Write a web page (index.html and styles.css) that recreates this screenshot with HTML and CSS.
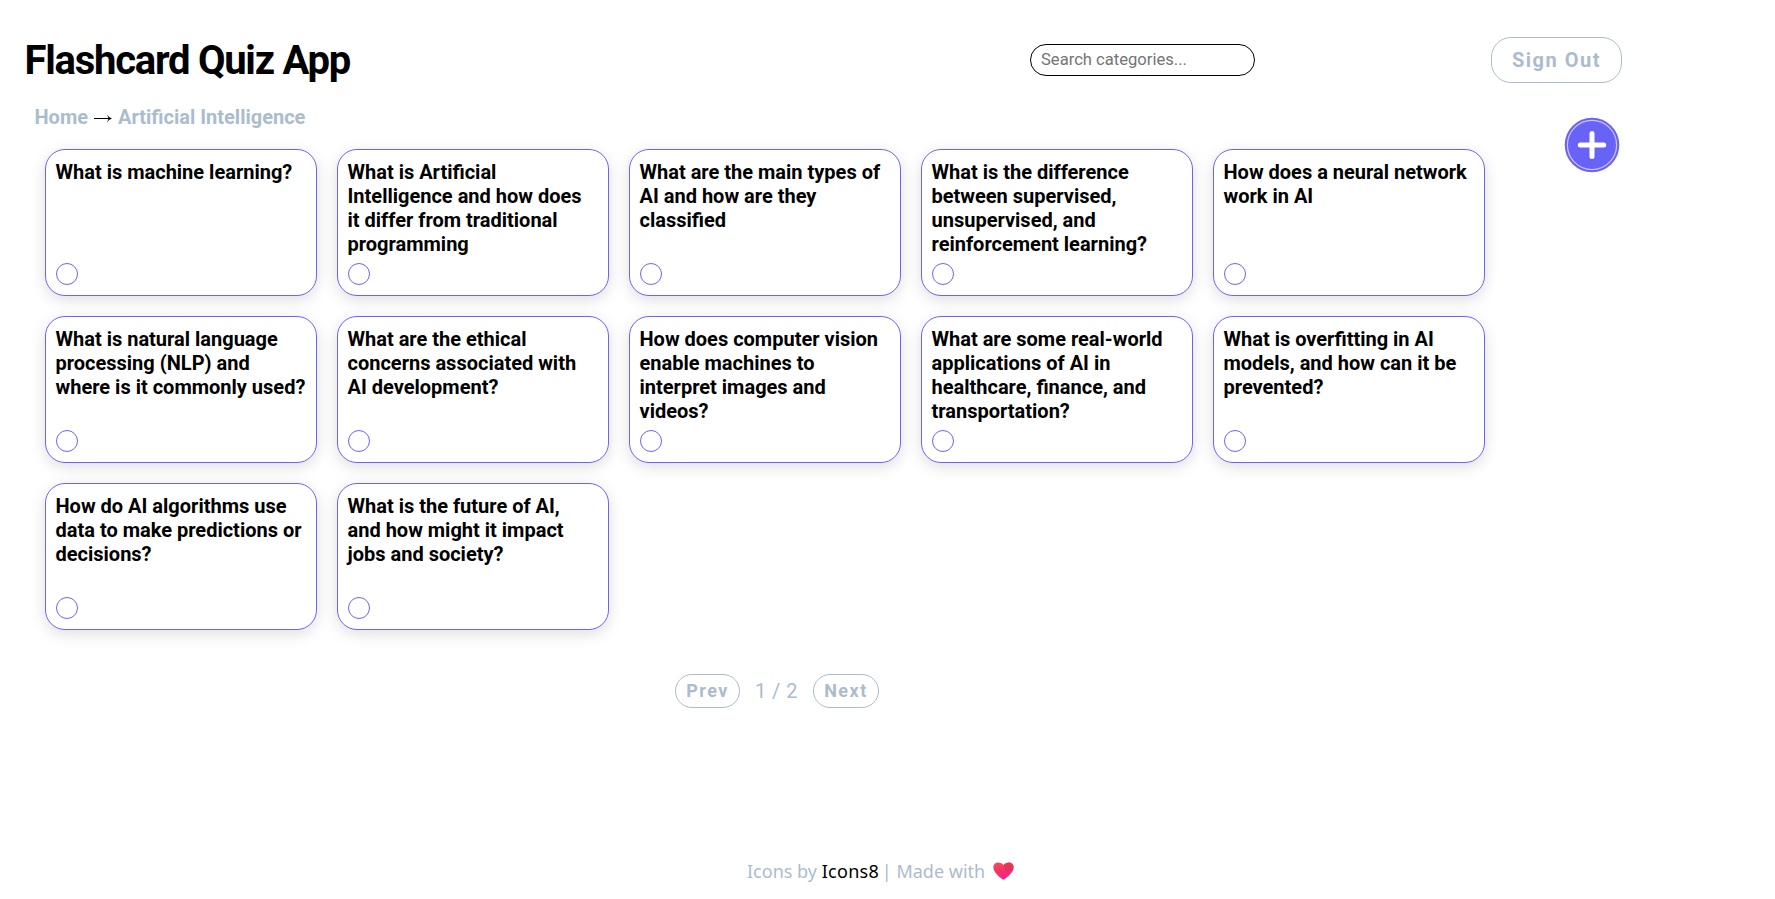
FILE: index.html
```html
<!DOCTYPE html>
<html lang="en">
<head>
<meta charset="utf-8">
<title>Flashcard Quiz App</title>
<link rel="stylesheet" href="styles.css">
</head>
<body>
<header class="header">
  <h1 class="title">Flashcard Quiz App</h1>
  <input class="search" type="text" placeholder="Search categories...">
  <button class="btn sign-out">Sign Out</button>
</header>
<main class="main">
  <div class="content">
    <nav class="crumbs"><a>Home</a><svg class="arrow" width="20" height="10" viewBox="0 0 20 10"><path d="M1 5.5H18" stroke="#000" stroke-width="1"/><path d="M14 1.500Q15.500 4.500 19 5.500Q15.500 6.500 14 9.500L15.600 5.500Z"/></svg><a>Artificial Intelligence</a></nav>
    <section class="cards">
      <article class="card"><h2>What is machine learning?</h2><span class="check"></span></article>
      <article class="card"><h2>What is Artificial Intelligence and how does it differ from traditional programming</h2><span class="check"></span></article>
      <article class="card"><h2>What are the main types of AI and how are they classified</h2><span class="check"></span></article>
      <article class="card"><h2>What is the difference between supervised, unsupervised, and reinforcement learning?</h2><span class="check"></span></article>
      <article class="card"><h2>How does a neural network work in AI</h2><span class="check"></span></article>
      <article class="card"><h2>What is natural language processing (NLP) and where is it commonly used?</h2><span class="check"></span></article>
      <article class="card"><h2>What are the ethical concerns associated with AI development?</h2><span class="check"></span></article>
      <article class="card"><h2>How does computer vision enable machines to interpret images and videos?</h2><span class="check"></span></article>
      <article class="card"><h2>What are some real-world applications of AI in healthcare, finance, and transportation?</h2><span class="check"></span></article>
      <article class="card"><h2>What is overfitting in AI models, and how can it be prevented?</h2><span class="check"></span></article>
      <article class="card"><h2>How do AI algorithms use data to make predictions or decisions?</h2><span class="check"></span></article>
      <article class="card"><h2>What is the future of AI,<br>and how might it impact jobs and society?</h2><span class="check"></span></article>
    </section>
    <div class="pager">
      <button class="btn page prev">Prev</button>
      <span class="count">1 / 2</span>
      <button class="btn page next">Next</button>
    </div>
  </div>
  <svg class="add" width="56" height="56" viewBox="0 0 56 56">
    <circle cx="28" cy="28" r="27.3" fill="#6962f7"/>
    <circle cx="28" cy="28" r="24.6" fill="none" stroke="#c9c5ff" stroke-width="1.2"/>
    <path d="M28 16.5V39.5M16.3 28H39.7" stroke="#fff" stroke-width="5" stroke-linecap="round"/>
  </svg>
</main>
<footer class="footer">
  <span class="credit">Icons by <a>Icons8</a> | Made with</span>
  <svg class="heart" width="21" height="18" viewBox="0 0 21 18">
    <defs><linearGradient id="heart-fill" x1="0" y1="0" x2=".35" y2="1"><stop offset="0" stop-color="#f0545c"/><stop offset=".5" stop-color="#f73362"/><stop offset="1" stop-color="#fd1e93"/></linearGradient></defs>
    <path d="M10.5 17.8C7.5 16 .3 10.5.3 5.3C.3 2.3 2.5.4 5.2.4C7.4.4 9.4 1.500 10.500 3C11.6 1.5 13.600.4 15.8.4C18.5.4 20.700 2.3 20.7 5.3C20.7 10.5 13.5 16 10.5 17.8Z" fill="url(#heart-fill)"/>
    <path d="M10.8 3.2C11.800 1.500 13.800.4 15.900.4C18.400.4 20.500 2.300 20.500 5C20 8.500 16 8.500 13.500 11C12.500 8 12 5 10.8 3.2Z" fill="#d8344e" opacity=".55"/>
  </svg>
</footer>
</body>
</html>
```

FILE: styles.css
```css
* { box-sizing: border-box; }
body {
  margin: 0;
  height: 899px;
  display: flex;
  flex-direction: column;
  background: #fff;
  color: #000;
  font-family: Roboto, sans-serif;
  font-size: 20px;
  overflow: hidden;
}
.header {
  display: flex;
  align-items: center;
  flex: none;
  height: 105px;
  padding: 15px 0 0 24.5px;
}
.title {
  margin: 0;
  width: 1005.5px;
  font-size: 40px;
  font-weight: 700;
  letter-spacing: -1.25px;
}
.search {
  width: 225px;
  height: 32px;
  padding: 0 10px 2px;
  border: 1px solid #000;
  border-radius: 16px;
  font: 16.6px Roboto, sans-serif;
}
.search::placeholder { color: #757575; }
.btn {
  padding: 0;
  border: 1px solid #abbccd;
  background: #fff;
  color: #abbccd;
  font: 700 20px Roboto, sans-serif;
}
.sign-out {
  width: 131px;
  height: 46px;
  margin-left: 236px;
  border-radius: 20px;
  letter-spacing: 1.5px;
}
.main { display: flex; }
.content { width: 1564px; padding-left: 35px; }
.crumbs {
  display: flex;
  align-items: center;
  height: 24px;
  margin-left: -.5px;
  color: #abbccd;
  font-weight: 700;
}
.arrow { margin: 2px 5px 0; }
.cards {
  display: grid;
  grid-template-columns: repeat(5, 272px);
  grid-auto-rows: 147px;
  gap: 20px;
  padding: 20px 0 0 10px;
}
.card {
  display: flex;
  flex-direction: column;
  justify-content: space-between;
  padding: 10px;
  border: 1px solid #6c63ff;
  border-radius: 20px;
  box-shadow: 0 4px 15px rgba(0, 0, 0, .13);
  background: #fff;
}
.card h2 {
  margin: 0 0 0 -.5px;
  font-size: 20px;
  line-height: 24px;
  font-weight: 700;
}
.check {
  width: 22px;
  height: 22px;
  border: 1px solid #6c63ff;
  border-radius: 50%;
}
.pager {
  display: flex;
  align-items: center;
  margin: 44px 0 0 640px;
  color: #abbccd;
}
.page { height: 34px; border-radius: 17px; font-size: 18px; letter-spacing: 1.5px; padding-bottom: 1px; }
.prev { width: 65px; }
.next { width: 66px; }
.count { width: 73px; text-align: center; letter-spacing: .5px; }
.add { margin-top: 12px; }
.footer {
  display: flex;
  align-items: center;
  gap: 9px;
  margin: auto 0 14px 747px;
  height: 28px;
  font-family: "Noto Sans", sans-serif;
  font-size: 18px;
  color: #abbccd;
}
.credit { width: 237px; white-space: nowrap; }
.footer a { color: #000; letter-spacing: .3px; margin-right: -2px; }
```
